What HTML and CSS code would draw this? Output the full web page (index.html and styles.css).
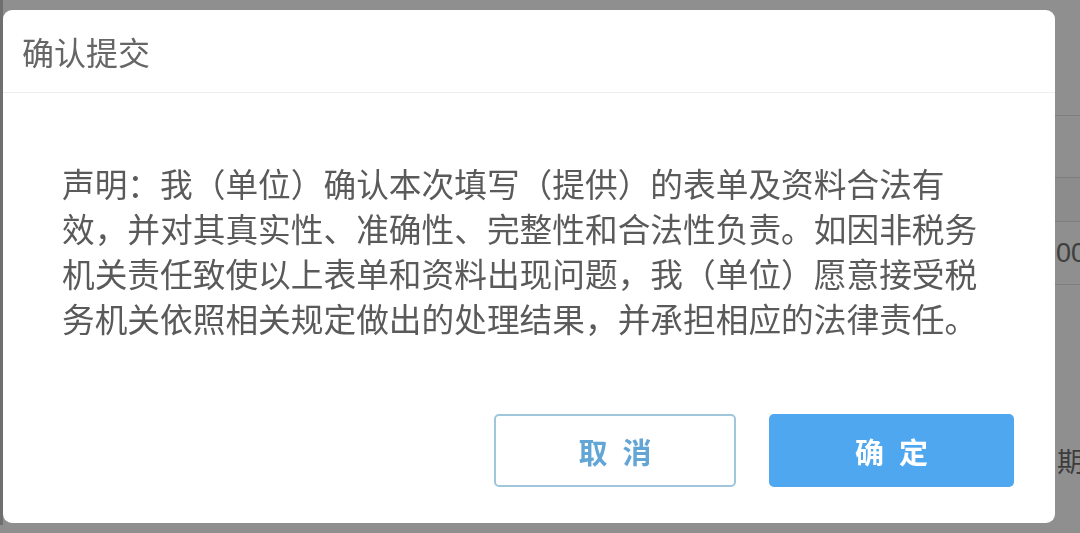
FILE: index.html
```html
<!DOCTYPE html>
<html lang="zh-CN">
<head>
<meta charset="utf-8">
<title>确认提交</title>
<link rel="stylesheet" href="styles.css">
</head>
<body>
<div class="page">
  <div class="row r1"></div>
  <div class="row r2"></div>
  <div class="row r3"></div>
  <div class="row r4"><span class="cell-text">001</span></div>
  <div class="row r5"><span class="cell-text">日期</span></div>
</div>
<div class="modal">
  <div class="modal-header">确认提交</div>
  <div class="modal-body">
    <p class="statement">声明：我（单位）确认本次填写（提供）的表单及资料合法有效，并对其真实性、准确性、完整性和合法性负责。如因非税务机关责任致使以上表单和资料出现问题，我（单位）愿意接受税务机关依照相关规定做出的处理结果，并承担相应的法律责任。</p>
    <div class="modal-footer">
      <button class="btn btn-cancel">取消</button>
      <button class="btn btn-ok">确定</button>
    </div>
  </div>
</div>
</body>
</html>
```
FILE: styles.css
```css
html, body {
  margin: 0;
  padding: 0;
  width: 1080px;
  height: 533px;
  overflow: hidden;
}
body {
  background: #8f8f8f;
  font-family: "Noto Sans CJK SC", "Noto Sans", sans-serif;
}
.page {
  display: flex;
  flex-direction: column;
  border-left: 3px solid #6f6f6f;
}
.row {
  border-bottom: 1px solid #7e7e7e;
  white-space: nowrap;
  overflow: hidden;
  display: flex;
  align-items: center;
}
.r1 { height: 115px; }
.r2 { height: 61px; }
.r3 { height: 43px; background: #8c8c8c; }
.r4 { height: 62px; }
.r5 { height: 240px; border-bottom: none; align-items: flex-start; padding-top: 156px; box-sizing: border-box; }
.cell-text {
  padding-left: 1053px;
  font-size: 27px;
  color: #3f3f3f;
  font-family: "Liberation Sans", "Noto Sans CJK SC", sans-serif;
}
.r5 .cell-text {
  padding-left: 1027px;
  font-family: "Noto Sans CJK SC", sans-serif;
  font-size: 27px;
  color: #3c3c3c;
}
.modal {
  position: fixed;
  left: 3px;
  top: 10px;
  width: 1052px;
  height: 513px;
  background: #fff;
  border-radius: 9px;
  box-sizing: border-box;
  display: flex;
  flex-direction: column;
  overflow: hidden;
}
.modal-header {
  height: 82px;
  flex: none;
  display: flex;
  align-items: center;
  padding-left: 19px;
  font-size: 32px;
  color: #666;
  border-bottom: 1px solid #eeeeee;
}
.modal-body {
  padding: 67px 41px 36px 59px;
  display: flex;
  flex-direction: column;
}
.statement {
  margin: 0;
  font-size: 32.7px;
  line-height: 45px;
  color: #5a5a5a;
  width: 28.1em;
}
.modal-footer {
  margin-top: 74px;
  display: flex;
  justify-content: flex-end;
  gap: 33px;
}
.btn {
  height: 73px;
  box-sizing: border-box;
  border-radius: 5px;
  font-family: "Noto Sans CJK SC", sans-serif;
  font-size: 29px;
  font-weight: 700;
  letter-spacing: 15px;
  padding: 0 0 0 15px;
  cursor: pointer;
}
.btn-cancel {
  width: 242px;
  background: #fff;
  border: 2px solid #9fc6da;
  color: #63a6d6;
}
.btn-ok {
  width: 245px;
  background: #4fa8ef;
  border: none;
  color: #fff;
}
```
